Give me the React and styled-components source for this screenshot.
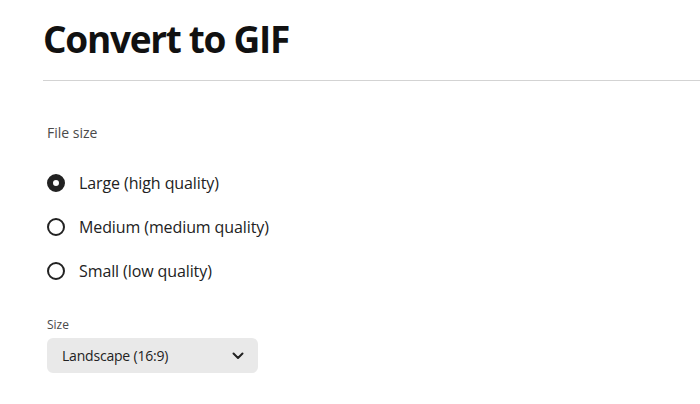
import React from 'react';
import styled, { createGlobalStyle } from 'styled-components';

const GlobalStyle = createGlobalStyle`
  body {
    margin: 0;
    background: #ffffff;
    font-family: "Open Sans", "Noto Sans", sans-serif;
    color: #222222;
  }
`;

const Page = styled.div`
  width: 700px;
  height: 404px;
  overflow: hidden;
  padding-left: 43px;
  box-sizing: border-box;
`;

const Title = styled.h1`
  margin: 0;
  padding-top: 16px;
  font-size: 37px;
  line-height: 46px;
  font-weight: 700;
  color: #111111;
  letter-spacing: -1.3px;
`;

const Divider = styled.hr`
  margin: 18px 0 0 0;
  border: none;
  border-top: 1px solid #d3d3d3;
`;

const Section = styled.div`
  padding-left: 4px;
  display: flex;
  flex-direction: column;
`;

const GroupLabel = styled.div`
  margin-top: 42px;
  font-size: 14px;
  line-height: 20px;
  color: #4a4a4a;
`;

const RadioList = styled.div`
  display: flex;
  flex-direction: column;
  gap: 22px;
  margin-top: 29px;
`;

const RadioRow = styled.label`
  display: flex;
  align-items: center;
  gap: 14px;
  font-size: 16px;
  line-height: 22px;
  letter-spacing: -0.1px;
  color: #222222;
`;

const RadioMark = styled.span`
  width: 18px;
  height: 18px;
  box-sizing: border-box;
  border-radius: 50%;
  border: ${p => (p.$checked ? '6px solid #222222' : '2px solid #222222')};
  background: #ffffff;
  flex: none;
`;

const FieldLabel = styled.div`
  margin-top: 35px;
  font-size: 12px;
  line-height: 16px;
  color: #4a4a4a;
`;

const Select = styled.div`
  margin-top: 5px;
  width: 211px;
  height: 35px;
  box-sizing: border-box;
  border-radius: 6px;
  background: #e9e9e9;
  display: flex;
  align-items: center;
  justify-content: space-between;
  padding: 0 14px 0 15px;
  font-size: 14px;
  letter-spacing: -0.2px;
  color: #222222;
`;

const options = [
  { label: 'Large (high quality)', checked: true },
  { label: 'Medium (medium quality)', checked: false },
  { label: 'Small (low quality)', checked: false },
];

export default function App() {
  return (
    <Page>
      <GlobalStyle />
      <Title>Convert to GIF</Title>
      <Divider />
      <Section>
        <GroupLabel>File size</GroupLabel>
        <RadioList>
          {options.map(o => (
            <RadioRow key={o.label}>
              <RadioMark $checked={o.checked} />
              {o.label}
            </RadioRow>
          ))}
        </RadioList>
        <FieldLabel>Size</FieldLabel>
        <Select>
          <span>Landscape (16:9)</span>
          <svg width="12" height="8" viewBox="0 0 12 8">
            <path d="M1.5 1.5 L6 6 L10.5 1.5" fill="none" stroke="#222" strokeWidth="2" strokeLinecap="round" strokeLinejoin="round" />
          </svg>
        </Select>
      </Section>
    </Page>
  );
}
